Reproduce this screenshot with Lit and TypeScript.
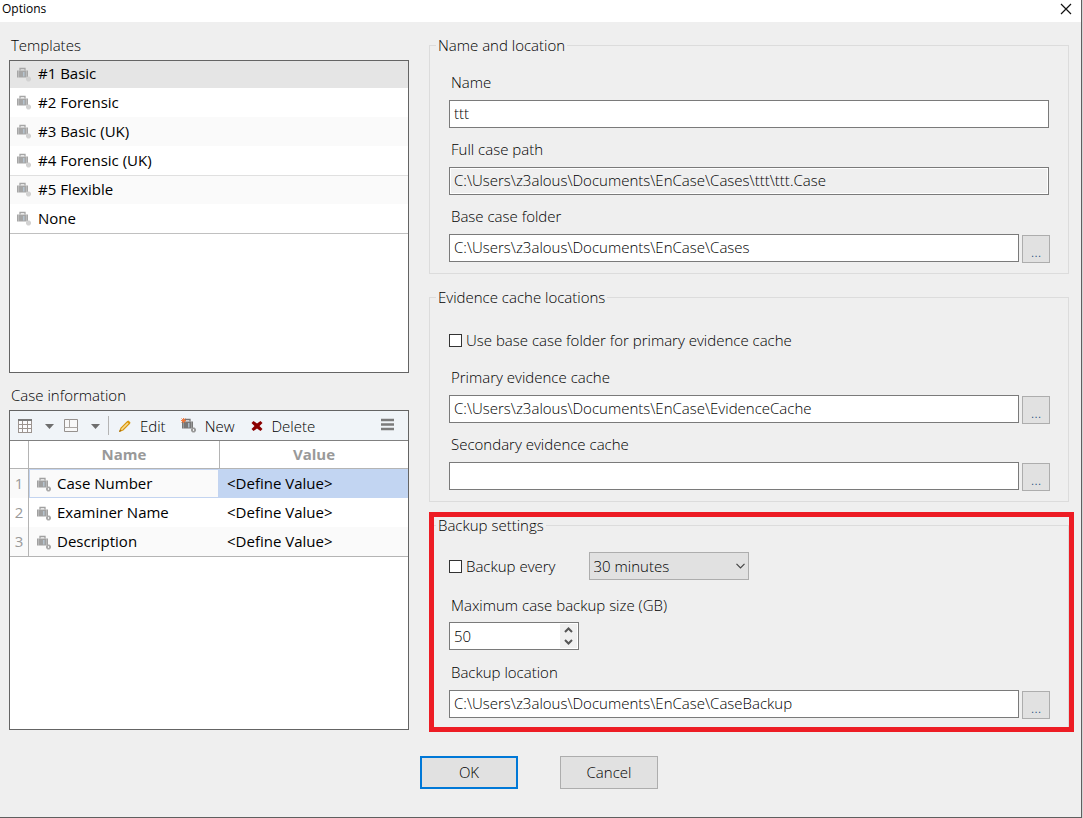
import { LitElement, html, css, svg, nothing } from "lit";
import { customElement, property, state } from "lit/decorators.js";
import { classMap } from "lit/directives/class-map.js";

const caseIcon = (tone: string, dot: string, ring = false, spark = false) => html`
  <svg class="case" width="16" height="16" viewBox="0 0 16 16" aria-hidden="true">
    <path d="M4 3.500v-2h5v2" fill="none" stroke=${tone} stroke-width="1.300" />
    <path d="M1 3.500h11v7H1z" fill=${tone} />
    <path d="M2.500 3.500v7M10.500 3.500v7" stroke="#fff" stroke-opacity=".25" />
    <path d="M7 5h1.500v4.500H7z" fill="#b9cad8" fill-opacity=".8" />
    <path d="M11.500 9.500h2l1.500 1.500v2l-1.500 1.500h-2L10 13v-2z" fill=${dot} />
    ${ring ? svg`<path d="M12.500 11v2" stroke="#eee" />` : nothing}
    ${spark ? svg`<path d="M.5.5l4 4M4.500.5l-4 4M2.500 0v5M0 2.500h5" stroke="#f07030" stroke-width=".9"/>` : nothing}
  </svg>`;

@customElement("case-toolbar")
class CaseToolbar extends LitElement {
  static styles = css`
    :host {
      box-sizing: border-box;
      display: flex;
      align-items: center;
      height: 30px;
      padding: 0 14px 0 7px;
      background: #f0f4f8;
      border-bottom: 1px solid #808080;
    }
    button {
      display: flex;
      align-items: center;
      gap: 8px;
      padding: 0;
      border: 0;
      background: none;
      color: #000;
      font: 300 15px/20px "Open Sans", sans-serif;
    }
    .view { gap: 12px; margin-right: 9px; }
    .caret { margin-top: 2px; }
    .rule { width: 1px; height: 19px; margin: 0 9px 0 -1px; background: #b4b4b4; }
    .act { margin-right: 15px; }
    .menu { margin-left: auto; margin-bottom: 3px; }
  `;
  render() {
    const caret = html`<svg class="caret" width="9" height="5" viewBox="0 0 9 5" aria-hidden="true"><path d="M0 0h9L4.500 5z" fill="#6e6e6e" /></svg>`;
    return html`
      <button class="view" type="button" aria-label="Table view">
        <svg width="16" height="16" viewBox="0 0 16 16" aria-hidden="true">
          <path d="M1 1h14v14H1z" fill="#fbfbfd" />
          <path d="M1.500 1v14M5.500 1v14M10.500 1v14M14.500 1v14M1 6.500h14M1 10.500h14M1 14.500h14" stroke="#9c9490" fill="none" />
          <path d="M1 1h14v2H1z" fill="#7c7c7c" />
        </svg>${caret}
      </button>
      <button class="view" type="button" aria-label="Pane layout">
        <svg width="16" height="16" viewBox="0 0 16 16" aria-hidden="true">
          <path d="M1.500 1.500h13v12h-13z" fill="#f8f8f8" stroke="#96918e" />
          <path d="M6.500 1.500v8M1.500 9.500h13" stroke="#aaa6a3" />
        </svg>${caret}
      </button>
      <span class="rule"></span>
      <button class="act" type="button">
        <svg width="14" height="14" viewBox="0 0 14 14" aria-hidden="true">
          <path d="M2 12l1-3 6.500-6.500 2 2L5 11z" fill="#f7dc98" stroke="#d9980f" stroke-width="1.200" />
          <path d="M9 2.500l2.500 2.500 1-1.500-2-2z" fill="#d9980f" />
          <path d="M1 13l1-2.500L3.500 12z" fill="#a06a10" />
        </svg>Edit
      </button>
      <button class="act" type="button">${caseIcon("#777", "#999", true, true)}New</button>
      <button class="act" type="button">
        <svg width="14" height="12" viewBox="0 0 14 12" aria-hidden="true">
          <path d="M1.500 3l2-2L7 3.500 10.500 1l2 2-3 3 3 3-2 2L7 8.500 3.500 11l-2-2 3-3z" fill="#8b0000" />
        </svg>Delete
      </button>
      <button class="menu" type="button" aria-label="Menu">
        <svg width="13" height="13" viewBox="0 0 13 13" aria-hidden="true">
          <path d="M0 2h13M0 6.500h13M0 11h13" stroke="#7b7b7b" stroke-width="2.500" />
        </svg>
      </button>`;
  }
}

@customElement("path-field")
class PathField extends LitElement {
  @property() label = "";
  @property() value = "";
  @property({ type: Boolean }) browse = false;
  @property({ type: Boolean }) locked = false;

  static styles = css`
    :host { display: block; font: 300 15px/20px "Open Sans", sans-serif; }
    label { display: block; margin: 0 0 8px 2px; }
    .row { display: flex; gap: 3px; }
    input {
      box-sizing: border-box;
      flex: 1;
      min-width: 0;
      height: 28px;
      padding: 0 4px 2px;
      border: 1px solid #7a7a7a;
      border-radius: 0;
      background: #fff;
      color: #000;
      font: inherit;
      outline: 0;
    }
    input:read-only { background: #efefef; box-shadow: inset 0 0 0 1px #fff; }
    button {
      box-sizing: border-box;
      width: 28px;
      height: 28px;
      margin: 1px -1px -1px 0;
      padding: 4px 0 0;
      border: 1px solid #adadad;
      background: #e1e1e1;
      color: #1d4f80;
      font: inherit;
    }
  `;
  render() {
    return html`
      <label for="box">${this.label}</label>
      <div class="row">
        <input id="box" type="text" .value=${this.value} ?readonly=${this.locked} />
        ${this.browse ? html`<button type="button" aria-label="Browse">...</button>` : nothing}
      </div>`;
  }
}

@customElement("app-root")
class AppRoot extends LitElement {
  @state() private template = 0;
  @state() private size = 50;

  private templates = ["#1 Basic", "#2 Forensic", "#3 Basic (UK)", "#4 Forensic (UK)", "#5 Flexible", "None"];
  private info = ["Case Number", "Examiner Name", "Description"];

  static styles = css`
    :host {
      display: block;
      padding-right: 1px;
      background: #d4d4d4;
      color: #000;
      font: 300 15px/20px "Open Sans", sans-serif;
    }
    .window {
      box-sizing: border-box;
      display: flex;
      flex-direction: column;
      min-height: 100vh;
      border: solid #5f5f5f;
      border-width: 0 1px 1px 0;
      background: #efefef;
    }
    header {
      display: flex;
      justify-content: space-between;
      align-items: center;
      height: 22px;
      padding: 0 9px 0 2px;
      background: #fff;
    }
    h1 { margin: 0 0 4px; font: 400 12px/18px "Open Sans", sans-serif; }
    h2 { margin: 0 0 5px 2px; font: inherit; }
    .close { display: flex; margin-bottom: 4px; padding: 0; border: 0; background: none; }
    main {
      display: grid;
      grid-template-columns: 5fr 8fr;
      gap: 20px;
      padding: 13px 12px 0 9px;
    }
    .left { display: flex; flex-direction: column; padding-bottom: 2px; }
    .box { box-sizing: border-box; border: 1px solid #646464; background: #fff; font-weight: 400; }
    .templates { height: 313px; margin: 0 0 12px; padding: 0; list-style: none; }
    .info { flex: 1; }
    .item {
      display: flex;
      align-items: center;
      gap: 6px;
      box-sizing: border-box;
      height: 29px;
      padding: 0 6px 2px;
    }
    .item:first-child { height: 27px; }
    .item:nth-child(odd) { background: #fafafa; }
    .item:nth-child(5) { border-top: 1px solid #e0e0e0; }
    .item:first-child, .item:nth-child(5) { padding-bottom: 3px; }
    .item:last-child { height: 30px; border-bottom: 1px solid #c0c0c0; }
    .item.on { background: #e5e5e5; }
    .case { flex: none; margin-top: 3px; }
    table { width: 100%; border-collapse: separate; border-spacing: 0; table-layout: fixed; }
    .gutter { width: 18px; }
    .names { width: 191px; }
    th, td { box-sizing: border-box; height: 29px; padding: 0 0 2px; }
    thead th { height: 28px; border-bottom: 1px solid #b4b4b4; color: #999; font-weight: 700; }
    thead th + th, tbody td:nth-child(2) { border-left: 1px solid #b4b4b4; }
    tbody td:nth-child(2) { padding: 0; }
    tbody th { color: #999; font-weight: 400; }
    tbody tr:nth-child(odd) { background: #fafafa; }
    tbody tr:last-child > * { height: 30px; border-bottom: 1px solid #b4b4b4; }
    .name { display: flex; align-items: center; gap: 5px; padding: 3px 6px 4px; border: 1px solid transparent; }
    .name.on { border-color: #c3d4f0; }
    .value { padding-left: 8px; }
    .value.on { background: #c2d5f2; }
    .right { display: flex; flex-direction: column; gap: 13px; }
    fieldset {
      min-width: 0;
      margin: 0;
      padding: 17px 19px 11px;
      border: 1px solid #dcdcdc;
    }
    legend { margin-left: -13px; padding: 0 2px; }
    path-field + path-field { margin-top: 11px; }
    .check { display: flex; align-items: center; gap: 4px; margin: 6px 0 17px; }
    .check input {
      box-sizing: border-box;
      appearance: none;
      width: 13px;
      height: 13px;
      margin: 0;
      border: 1px solid #333;
      background: #fff;
    }
    .marked { position: relative; }
    .marked::after {
      content: "";
      position: absolute;
      inset: -3px -5px 0 0;
      border: 5px solid #ed1c24;
      pointer-events: none;
    }
    .marked fieldset { padding-bottom: 13px; }
    .schedule { display: flex; align-items: center; gap: 33px; margin-bottom: 15px; }
    .schedule .check { margin: 0; }
    .pick { display: grid; align-items: center; }
    .pick > * { grid-area: 1 / 1; }
    .pick svg { justify-self: end; margin-right: 4px; pointer-events: none; }
    select {
      box-sizing: border-box;
      appearance: none;
      width: 160px;
      height: 28px;
      padding: 0 4px;
      border: 1px solid #adadad;
      border-radius: 0;
      background: #e1e1e1;
      color: #000;
      font: inherit;
    }
    .size-label { display: block; margin: 0 0 7px 2px; }
    .spin {
      box-sizing: border-box;
      display: flex;
      width: 130px;
      height: 28px;
      margin-bottom: 12px;
      padding: 1px;
      border: 1px solid #7a7a7a;
      background: #fff;
    }
    .spin input {
      appearance: textfield;
      flex: 1;
      min-width: 0;
      padding: 0 3px;
      border: 0;
      background: none;
      color: #000;
      font: inherit;
      outline: 0;
    }
    .spin input::-webkit-inner-spin-button { appearance: none; }
    .arrows { display: grid; width: 17px; background: #f0f0f0; }
    .arrows button { display: grid; place-items: center; padding: 0; border: 0; background: none; }
    footer { display: flex; justify-content: center; gap: 42px; padding: 24px 3px 20px 0; }
    footer button {
      box-sizing: border-box;
      width: 98px;
      height: 33px;
      padding: 0 0 2px;
      border: 1px solid #adadad;
      background: #e1e1e1;
      color: #000;
      font: inherit;
    }
    footer .primary { border: 2px solid #0078d7; }
  `;

  render() {
    return html`
      <div class="window">
        <header>
          <h1>Options</h1>
          <button class="close" type="button" aria-label="Close">
            <svg width="12" height="12" viewBox="0 0 12 12" aria-hidden="true">
              <path d="M1 1l10 10M11 1L1 11" stroke="#111" stroke-width="1.200" />
            </svg>
          </button>
        </header>
        <main>
          <div class="left">
            <h2 id="tpl">Templates</h2>
            <ul class="box templates" role="listbox" aria-labelledby="tpl">
              ${this.templates.map(
                (t, i) => html`<li
                  class=${classMap({ item: true, on: i === this.template })}
                  role="option"
                  aria-selected=${i === this.template}
                  @click=${() => (this.template = i)}
                >${caseIcon("#a6a6a6", "#d2d2d2")}${t}</li>`
              )}
            </ul>
            <h2>Case information</h2>
            <div class="box info">
              <case-toolbar></case-toolbar>
              <table>
                <colgroup><col class="gutter" /><col class="names" /><col /></colgroup>
                <thead><tr><th></th><th scope="col">Name</th><th scope="col">Value</th></tr></thead>
                <tbody>
                  ${this.info.map(
                    (n, i) => html`<tr>
                      <th scope="row">${i + 1}</th>
                      <td><div class=${classMap({ name: true, on: i === 0 })}>${caseIcon("#a0a0a0", "#aaa", true)}${n}</div></td>
                      <td class=${classMap({ value: true, on: i === 0 })}>&lt;Define Value&gt;</td>
                    </tr>`
                  )}
                </tbody>
              </table>
            </div>
          </div>
          <div class="right">
            <fieldset>
              <legend>Name and location</legend>
              <path-field label="Name" value="ttt"></path-field>
              <path-field label="Full case path" value="C:\\Users\\z3alous\\Documents\\EnCase\\Cases\\ttt\\ttt.Case" locked></path-field>
              <path-field label="Base case folder" value="C:\\Users\\z3alous\\Documents\\EnCase\\Cases" browse></path-field>
            </fieldset>
            <fieldset>
              <legend>Evidence cache locations</legend>
              <label class="check"><input type="checkbox" />Use base case folder for primary evidence cache</label>
              <path-field label="Primary evidence cache" value="C:\\Users\\z3alous\\Documents\\EnCase\\EvidenceCache" browse></path-field>
              <path-field label="Secondary evidence cache" browse></path-field>
            </fieldset>
            <div class="marked">
              <fieldset>
                <legend>Backup settings</legend>
                <div class="schedule">
                  <label class="check"><input type="checkbox" />Backup every</label>
                  <div class="pick">
                    <select aria-label="Backup interval"><option>30 minutes</option></select>
                    <svg width="9" height="6" viewBox="0 0 9 6" aria-hidden="true">
                      <path d="M.5.8l4 4 4-4" fill="none" stroke="#444" stroke-width="1.200" />
                    </svg>
                  </div>
                </div>
                <label class="size-label" for="size">Maximum case backup size (GB)</label>
                <div class="spin">
                  <input id="size" type="number" .value=${String(this.size)} />
                  <div class="arrows">
                    <button type="button" aria-label="Increase" @click=${() => this.size++}>
                      <svg width="9" height="6" viewBox="0 0 9 6" aria-hidden="true"><path d="M1 5l3.500-3.500L8 5" fill="none" stroke="#555" stroke-width="2" /></svg>
                    </button>
                    <button type="button" aria-label="Decrease" @click=${() => this.size--}>
                      <svg width="9" height="6" viewBox="0 0 9 6" aria-hidden="true"><path d="M1 1l3.500 3.500L8 1" fill="none" stroke="#555" stroke-width="2" /></svg>
                    </button>
                  </div>
                </div>
                <path-field label="Backup location" value="C:\\Users\\z3alous\\Documents\\EnCase\\CaseBackup" browse></path-field>
              </fieldset>
            </div>
          </div>
        </main>
        <footer>
          <button class="primary" type="button">OK</button>
          <button type="button">Cancel</button>
        </footer>
      </div>`;
  }
}
